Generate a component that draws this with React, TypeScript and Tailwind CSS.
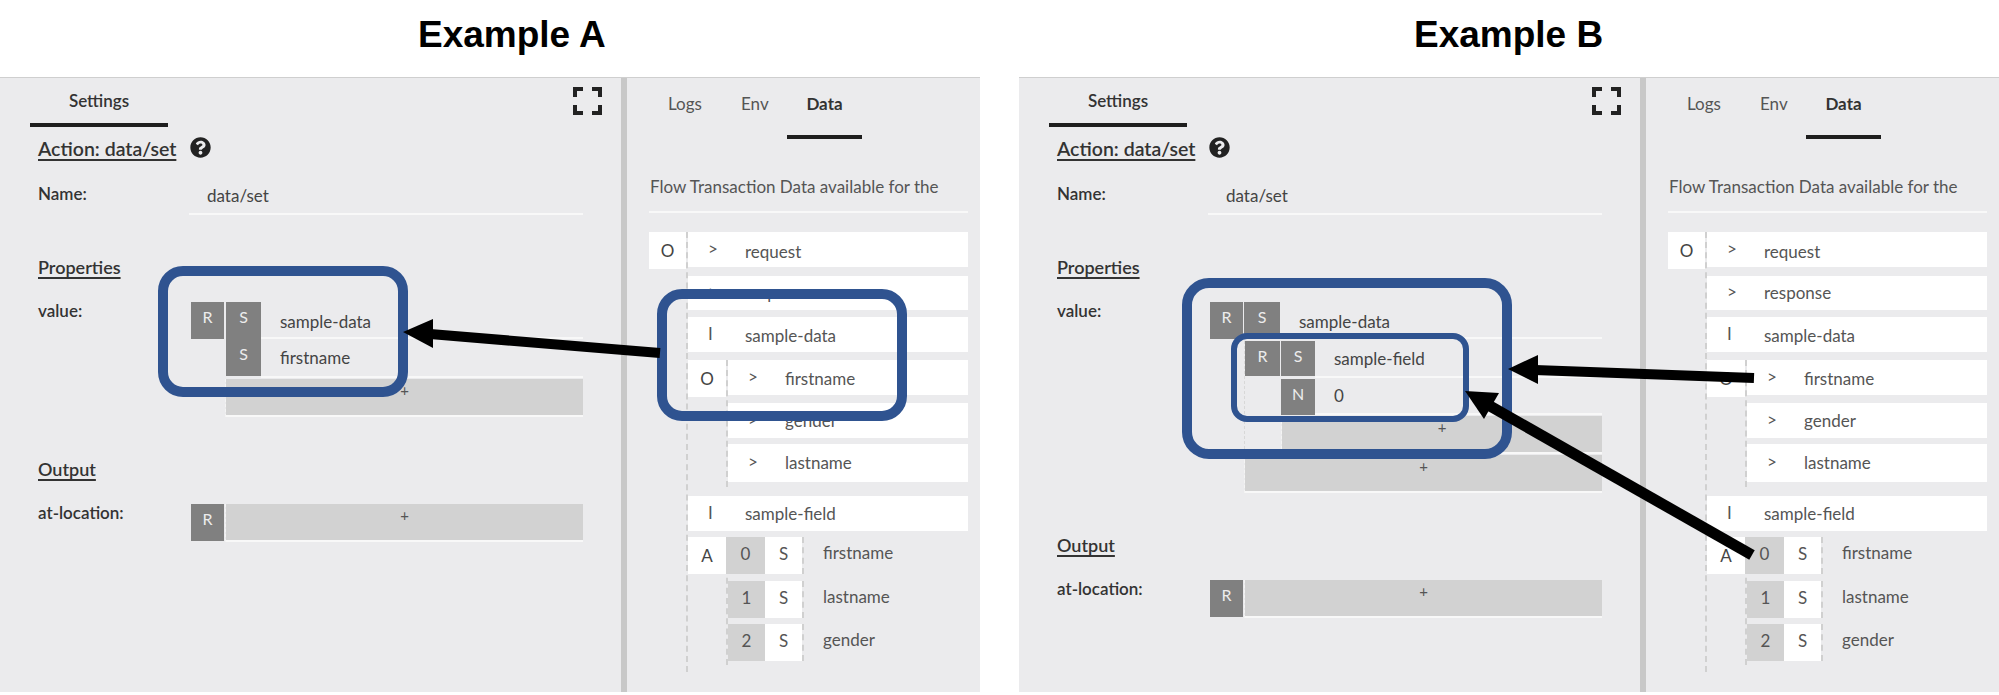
import React from "react";
import { FaQuestionCircle } from "react-icons/fa";

function Block({ children, className = "" }: { children: React.ReactNode; className?: string }) {
  return (
    <div className={"bg-[#808080] text-[#ececec] text-[16px] leading-[22px] pt-[4px] text-center shrink-0 " + className}>
      {children}
    </div>
  );
}

function FieldRow({ children, className = "", pad = "pl-[19px]" }: { children: React.ReactNode; className?: string; pad?: string }) {
  return (
    <div className={"flex-1 flex items-center border-b-2 border-[#f8f8f8] text-[17px] text-[#444] " + pad + " " + className}>
      {children}
    </div>
  );
}

function Add({ className = "" }: { className?: string }) {
  return (
    <div className={"flex-1 border-l border-dashed border-[#f4f4f4] " + className}>
      <div className="h-full bg-[#d2d2d2] border-b-2 border-[#f8f8f8] text-center text-[15px] leading-[22px] text-[#555]">+</div>
    </div>
  );
}

function Heading({ children, className = "" }: { children: React.ReactNode; className?: string }) {
  return (
    <div className={"ml-[38px] h-[24px] -translate-y-[3px] leading-[24px] text-[18px] font-semibold text-[#333] underline underline-offset-[3px] decoration-[1.5px] " + className}>
      {children}
    </div>
  );
}

function Label({ children }: { children: React.ReactNode }) {
  return <div className="w-[153px] shrink-0 -mt-[3px] text-[17px] leading-[24px] font-semibold text-[#333]">{children}</div>;
}

function ValueA() {
  return (
    <div className="flex flex-1 min-w-0">
      <Block className="w-[33px] h-[37px]">R</Block>
      <div className="flex-1 flex flex-col ml-px">
        <div className="flex">
          <Block className="w-[35px] h-[74px] ml-px flex flex-col gap-[15px]">
            <span>S</span>
            <span>S</span>
          </Block>
          <div className="flex-1 flex flex-col">
            <FieldRow className="h-[37px] flex-none pt-[5px]">sample-data</FieldRow>
            <FieldRow className="h-[39px] flex-none">firstname</FieldRow>
          </div>
        </div>
        <Add className="h-[38px] flex-none mt-px" />
      </div>
    </div>
  );
}

function ValueB() {
  return (
    <div className="flex flex-1 min-w-0">
      <Block className="w-[33px] h-[37px]">R</Block>
      <div className="flex-1 flex flex-col ml-px">
        <div className="flex">
          <Block className="w-[36px] h-[37px]">S</Block>
          <FieldRow className="h-[37px] pt-[5px]">sample-data</FieldRow>
        </div>
        <div className="flex mt-[2px]">
          <div className="w-[36px] shrink-0 border-l border-dashed border-[#d8d8d8]">
            <Block className="h-[35px]">R</Block>
          </div>
          <div className="flex-1 flex flex-col ml-px">
            <div className="flex">
              <Block className="w-[34px] h-[35px]">S</Block>
              <FieldRow className="h-[37px]">sample-field</FieldRow>
            </div>
            <div className="flex mt-px">
              <Block className="w-[34px] h-[36px]">N</Block>
              <FieldRow className="h-[36px]">0</FieldRow>
            </div>
            <Add className="h-[38px] flex-none mt-px" />
          </div>
        </div>
        <Add className="h-[38px] flex-none mt-px" />
      </div>
    </div>
  );
}

function LeftPane({ variant }: { variant: "a" | "b" }) {
  return (
    <div className="w-[621px] shrink-0 flex flex-col">
      <div className="flex justify-between h-[49px]">
        <div className="ml-[30px] w-[138px] h-full border-b-4 border-[#1e1e1e] flex items-center justify-center text-[17px] font-semibold text-[#333]">
          Settings
        </div>
        <svg className="mt-[9px] mr-[19px]" width="29" height="28" viewBox="0 0 29 28" fill="none" stroke="#222" strokeWidth="4">
          <path d="M2 10V2H10M19 2H27V10M27 18V26H19M10 26H2V18" />
        </svg>
      </div>
      <div className="ml-[38px] mt-[10px] h-[24px] flex items-center">
        <span className="text-[19.5px] leading-[24px] font-semibold text-[#333] underline underline-offset-[3px] decoration-[1.5px]">Action: data/set</span>
        <FaQuestionCircle className="ml-[14px] -mt-[3px] text-[#222] text-[21px]" />
      </div>
      <div className="flex ml-[38px] mr-[38px] mt-[20px] h-[34px]">
        <div className="w-[151px] shrink-0 text-[17px] leading-[30px] -mt-[2px] font-semibold text-[#333]">Name:</div>
        <div className="flex-1 flex items-center pl-[18px] pb-[2px] border-b-2 border-[#f8f8f8] text-[17px] text-[#444]">data/set</div>
      </div>
      <Heading className="mt-[43px]">Properties</Heading>
      <div className="flex ml-[38px] mr-[38px] mt-[20px]">
        <Label>value:</Label>
        {variant === "a" ? <ValueA /> : <ValueB />}
      </div>
      <Heading className="mt-[43px]">Output</Heading>
      <div className="flex ml-[38px] mr-[38px] mt-[20px]">
        <Label>at-location:</Label>
        <div className="flex flex-1">
          <Block className="w-[33px] h-[37px]">R</Block>
          <Add className="h-[38px] ml-px" />
        </div>
      </div>
    </div>
  );
}

function Letter({ children, className = "" }: { children: React.ReactNode; className?: string }) {
  return <div className={"bg-white flex items-center justify-center shrink-0 text-[17px] text-[#444] " + className}>{children}</div>;
}

function TreeRow({ icon, text, className = "", textClass = "" }: { icon: string; text: string; className?: string; textClass?: string }) {
  return (
    <div className={"bg-white flex items-center text-[17px] text-[#555] " + className}>
      <span className="w-[57px] shrink-0 pl-[20px] -mt-[2px]">{icon}</span>
      <span className={textClass}>{text}</span>
    </div>
  );
}

function ArrayRow({ index, text, first = false, className = "" }: { index: string; text: string; first?: boolean; className?: string }) {
  return (
    <div className={"flex h-[37px] " + className}>
      <div className={"bg-[#d2d2d2] flex items-center justify-center pb-[3px] text-[17px] text-[#555] " + (first ? "w-[39px] -ml-[2px]" : "w-[37px]")}>{index}</div>
      <div className="w-[37px] bg-white flex items-center justify-center pb-[3px] text-[17px] text-[#555]">S</div>
      <div className="flex-1 border-l-2 border-dashed border-[#d0d0d0] pl-[19px] pb-[5px] flex items-center text-[17px] text-[#555]">{text}</div>
    </div>
  );
}

function RightPane() {
  return (
    <div className="flex-1 flex flex-col min-w-0">
      <div className="flex h-[61px] text-[17px] text-[#555]">
        <div className="w-[37px] ml-[41px] pt-[14px] leading-[24px]">Logs</div>
        <div className="w-[28px] ml-[36px] pt-[14px] leading-[24px]">Env</div>
        <div className="w-[75px] ml-[18px] pt-[14px] leading-[24px] h-full text-center font-bold text-[#333] border-b-4 border-[#1e1e1e]">Data</div>
      </div>
      <div className="ml-[22px] mr-[12px] h-[74px] flex items-end pb-[12px] border-b-2 border-[#f8f8f8] text-[17px] leading-[24px] text-[#555] whitespace-nowrap">
        <span className="ml-px">Flow Transaction Data available for the</span>
      </div>
      <div className="flex mt-[19px] ml-[22px] mr-[12px]">
        <Letter className="w-[37px] h-[37px]">O</Letter>
        <div className="flex-1 flex flex-col border-l-2 border-dashed border-[#d0d0d0] pb-[7px]">
          <TreeRow icon=">" text="request" className="h-[35px]" textClass="mt-[4px]" />
          <TreeRow icon=">" text="response" className="h-[34px] mt-[9px]" />
          <TreeRow icon="I" text="sample-data" className="h-[35px] mt-[7px]" textClass="mt-[3px]" />
          <div className="flex mt-[8px]">
            <Letter className="w-[38px] h-[37px]">O</Letter>
            <div className="flex-1 flex flex-col border-l-2 border-dashed border-[#d0d0d0] pb-[5px]">
              <TreeRow icon=">" text="firstname" className="h-[35px]" textClass="mt-[3px]" />
              <TreeRow icon=">" text="gender" className="h-[35px] mt-[8px]" />
              <TreeRow icon=">" text="lastname" className="h-[38px] mt-[6px]" />
            </div>
          </div>
          <TreeRow icon="I" text="sample-field" className="h-[35px] mt-[9px]" />
          <div className="flex mt-[6px]">
            <Letter className="w-[38px] h-[37px]">A</Letter>
            <div className="flex-1 flex flex-col border-l-2 border-dashed border-[#d0d0d0] pb-[4px]">
              <ArrayRow index="0" text="firstname" first />
              <ArrayRow index="1" text="lastname" className="mt-[7px]" />
              <ArrayRow index="2" text="gender" className="mt-[6px]" />
            </div>
          </div>
        </div>
      </div>
    </div>
  );
}

function Panel({ variant }: { variant: "a" | "b" }) {
  return (
    <div className="w-[980px] h-[615px] shrink-0 flex bg-[#ebebed] border-t border-[#cfcfcf]">
      <LeftPane variant={variant} />
      <div className="w-[6px] shrink-0 bg-[#c8c8c8]" />
      <RightPane />
    </div>
  );
}

export default function App() {
  return (
    <div className="relative w-[1999px] h-[695px] overflow-hidden bg-white font-['Lato',sans-serif]">
      <div className="flex h-[77px] font-['Liberation_Sans',sans-serif] font-bold text-[37px] text-black">
        <div className="w-[1019px] pl-[418px] pt-[14px] leading-[42px]">Example A</div>
        <div className="pl-[395px] pt-[14px] leading-[42px]">Example B</div>
      </div>
      <div className="flex gap-[39px]">
        <Panel variant="a" />
        <Panel variant="b" />
      </div>
      <svg className="absolute inset-0 pointer-events-none" width="1999" height="695" viewBox="0 0 1999 695" fill="none">
        <g stroke="#2f5390" strokeWidth="10">
          <rect x="163" y="271" width="240" height="121" rx="20" />
          <rect x="662" y="294" width="240" height="122" rx="20" />
          <rect x="1187" y="283" width="320" height="171" rx="22" />
        </g>
        <rect x="1234" y="336" width="232" height="83" rx="13" stroke="#2f5390" strokeWidth="6" />
        <g fill="#000" stroke="#000">
          <path d="M430 334L660 353" strokeWidth="10" />
          <polygon points="403,332 433,319 433,348" strokeWidth="0" />
          <path d="M1535 370L1754 378" strokeWidth="10" />
          <polygon points="1508,369 1538,355 1538,384" strokeWidth="0" />
          <path d="M1490 406L1752 555" strokeWidth="11" />
          <polygon points="1465,391 1499,393 1484,419" strokeWidth="0" />
        </g>
      </svg>
    </div>
  );
}
